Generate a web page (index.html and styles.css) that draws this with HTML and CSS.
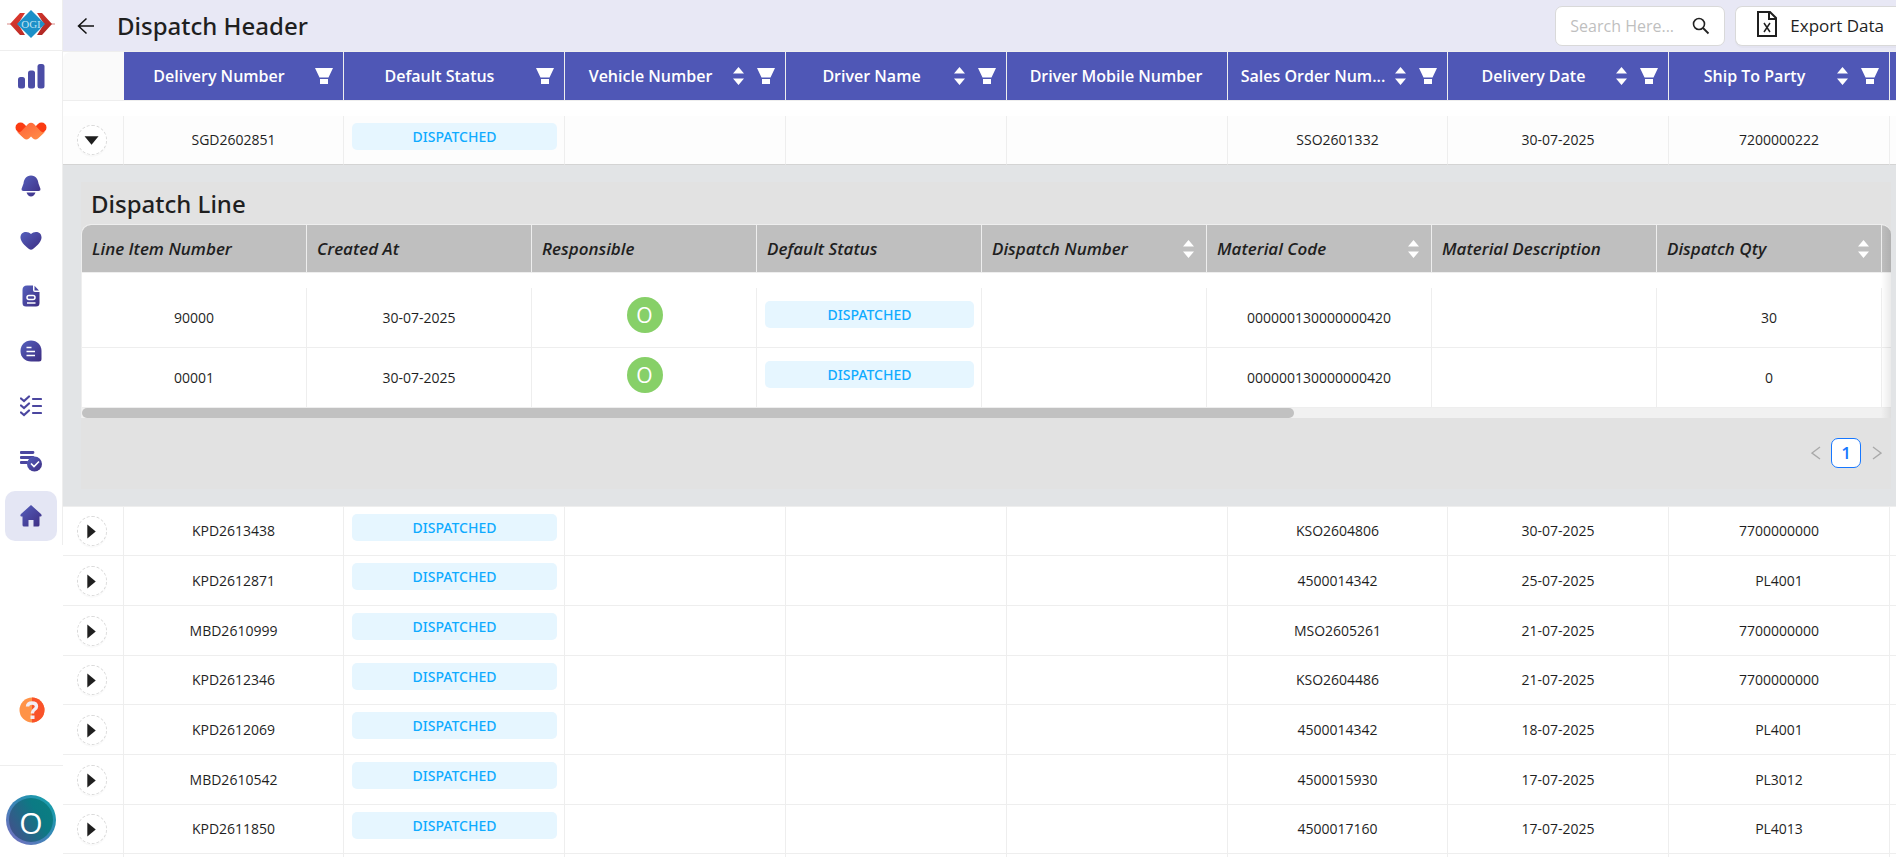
FILE: index.html
```html
<!DOCTYPE html>
<html lang="en">
<head>
<meta charset="utf-8">
<title>Dispatch Header</title>
<link rel="stylesheet" href="styles.css">
</head>
<body>
<svg class="defs" aria-hidden="true">
  <defs>
    <linearGradient id="indigo" x1="0" y1="0" x2="1" y2="1"><stop offset="0" stop-color="#5560bd"/><stop offset="1" stop-color="#3d2d82"/></linearGradient>
    <linearGradient id="orange" x1="0" y1="0" x2="1" y2="1"><stop offset="0" stop-color="#ff5f38"/><stop offset="1" stop-color="#ff9248"/></linearGradient>
    <linearGradient id="red" x1="0" y1="0" x2="1" y2="1"><stop offset="0" stop-color="#e23b30"/><stop offset="1" stop-color="#a92522"/></linearGradient>
  </defs>
  <symbol id="filter" viewBox="0 0 18 16"><path d="M0 0h18l-4.500 9.500H4.500zM5 11h8v5H5z" fill="#fff"/></symbol>
  <symbol id="sort" viewBox="0 0 11 18"><path d="M5.500 0L11 6.500H0zM0 11.500h11L5.500 18z" fill="#fff"/></symbol>
  <symbol id="right" viewBox="0 0 30 30"><path d="M10 8v15l9-7.500z" fill="#1f1f1f"/></symbol>
  <symbol id="down" viewBox="0 0 30 30"><path d="M7 11h15l-7.500 9z" fill="#1f1f1f"/></symbol>
</svg>
<div class="app">
  <aside class="sidebar">
    <a class="logo" href="#" aria-label="OGI">
      <svg width="48" height="28" viewBox="0 0 48 28">
        <path d="M0 14h48" stroke="#d98a86"/>
        <path d="M3 14L13 3h5L11 14l7 11h-5zM45 14L35 3h-5l7 11-7 11h5z" fill="url(#red)"/>
        <path d="M24 0l14 14-14 14L10 14z" fill="#1c90c8"/>
        <text x="24" y="18" text-anchor="middle" class="logo-text">OGI</text>
      </svg>
    </a>
    <nav class="nav">
      <a href="#" aria-label="Reports"><svg width="28" height="26" viewBox="0 0 28 26"><g fill="#4b4da6"><rect x="1" y="14" width="7" height="11.500" rx="2.500"/><rect x="11" y="7.500" width="7" height="18" rx="2.500"/><rect x="20.500" y="1" width="7" height="24.500" rx="2.500"/></g></svg></a>
      <a href="#" aria-label="Workspace"><svg width="32" height="18" viewBox="0 0 32 18"><path d="M5.500 5.500l5 5M26.500 5.500l-5 5" stroke="#fb3b12" stroke-width="10" stroke-linecap="round"/><path d="M1.500 9.500L9 16.500Q11.500 18.500 14 16.500L16 14.500l2 2Q20.500 18.500 23 16.500L30.500 9.500Q28 11.500 25.500 9L19 2Q16-.500 13 2L6.500 9Q4 11.500 1.500 9.500z" fill="url(#orange)"/></svg></a>
      <a href="#" aria-label="Notifications"><svg width="20" height="22" viewBox="0 0 20 22"><path d="M10 .5c5 0 7 4 7.500 8L19.500 14q.3 2-2 2h-15q-2.300 0-2-2L2.500 8.500C3 4.500 5 .5 10 .5zM5.500 17.500h9Q13 21.500 10 21.500T5.500 17.500z" fill="url(#indigo)"/></svg></a>
      <a href="#" aria-label="Favourites"><svg width="22" height="20" viewBox="0 0 22 20"><path d="M11 3C8-.5 0 0 .5 7 1 12 7 16 9 18q2 1.500 4 0c2-2 8-6 8.500-11C22 0 14-.5 11 3z" fill="url(#indigo)"/></svg></a>
      <a href="#" aria-label="Documents"><svg width="18" height="22" viewBox="0 0 18 22"><path d="M5 .5h6V5q0 2 2 2h4.500v11q0 3.500-3.500 3.500H4Q.5 21.500.5 18V5Q.5.5 5 .5zM12.500.8L17 5.500h-4.500z" fill="url(#indigo)"/><rect x="5" y="10.500" width="8" height="4" rx="2" fill="none" stroke="#fff" stroke-width="1.500"/><path d="M5 18h8.500" stroke="#fff" stroke-width="1.500"/></svg></a>
      <a href="#" aria-label="Messages"><svg width="22" height="22" viewBox="0 0 22 22"><path d="M11 .5c6 0 10.500 4.500 10.500 10.500v8q0 2.500-2.500 2.500h-8C5 21.500.5 17 .5 11S5 .5 11 .5z" fill="url(#indigo)"/><path d="M6.500 7.500h5M6.500 11.500H15M6.500 15.500H15" stroke="#fff" stroke-width="1.600"/></svg></a>
      <a href="#" aria-label="Tasks"><svg width="22" height="22" viewBox="0 0 22 22"><path d="M1 3.500l3 2.500 5-4.500M1 10.500L4 13l5-4.500M1 17.500L4 20l5-4.500M13 4h8M13 11h8M13 18h8" fill="none" stroke="#4b46a0" stroke-width="2.200" stroke-linecap="round"/></svg></a>
      <a href="#" aria-label="Approvals"><svg width="22" height="22" viewBox="0 0 22 22"><path d="M1 2.500h12M1 7.500h12M1 12.500h6" stroke="#4b46a0" stroke-width="2.800" stroke-linecap="round"/><circle cx="14.500" cy="14" r="7.500" fill="url(#indigo)"/><path d="M11 13.500l3 3 5-5" fill="none" stroke="#fff" stroke-width="1.700"/></svg></a>
      <a class="active" href="#" aria-label="Home"><svg width="22" height="22" viewBox="0 0 22 22"><path d="M11 0l10 9q1.500 2-.5 2.500H19.500V20q0 1.500-1.500 1.500H13.500V15h-5v6.500H4Q2.500 21.500 2.500 20v-8.500H1.500Q-.5 11 1 9z" fill="url(#indigo)"/></svg></a>
    </nav>
    <a class="help" href="#" aria-label="Help"><svg width="26" height="26" viewBox="0 0 26 26"><circle cx="13" cy="13" r="12.500" fill="#ff9347"/><path d="M13 .5a12.500 12.500 0 0 1 0 25z" fill="#f9522a"/><path d="M8.500 9.500Q8.500 6 13 6t4.500 3.500c0 3-4 3-4 6v1" fill="none" stroke="#f3edf5" stroke-width="3.400"/><rect x="11.500" y="18.500" width="4" height="3.500" fill="#f3edf5"/></svg></a>
    <div class="account"><button class="account-avatar" type="button">O</button></div>
  </aside>
  <main class="main">
    <header class="topbar">
      <button class="back" type="button" aria-label="Back"><svg width="18" height="18" viewBox="0 0 18 18"><path d="M17 9H1.500M9.500 1.500L1.500 9l8 7.500" fill="none" stroke="#111" stroke-width="1.500"/></svg></button>
      <h1 class="title">Dispatch Header</h1>
      <label class="search"><input type="text" placeholder="Search Here..." aria-label="Search"><svg width="18" height="18" viewBox="0 0 18 18"><circle cx="7" cy="7" r="5.500" fill="none" stroke="#222" stroke-width="1.600"/><path d="M11 11l5.500 5.500" stroke="#222" stroke-width="1.800"/></svg></label>
      <button class="export" type="button"><svg width="20" height="26" viewBox="0 0 20 26"><path d="M1 1h12l6 6v18H1zM12 1v7h7" fill="none" stroke="#1f1f1f" stroke-width="2"/><path d="M7 12l6 9M13 12l-6 9" stroke="#1f1f1f" stroke-width="1.500"/></svg>Export Data</button>
    </header>
    <table class="grid">
      <colgroup><col class="c-toggle"><col class="c-key"><col><col><col><col><col class="c-key"><col><col><col></colgroup>
      <thead><tr>
        <th class="blank"></th>
        <th><div class="head"><span>Delivery Number</span><svg class="i-filter"><use href="#filter"/></svg></div></th>
        <th><div class="head"><span>Default Status</span><svg class="i-filter"><use href="#filter"/></svg></div></th>
        <th><div class="head"><span>Vehicle Number</span><svg class="i-sort"><use href="#sort"/></svg><svg class="i-filter"><use href="#filter"/></svg></div></th>
        <th><div class="head"><span>Driver Name</span><svg class="i-sort"><use href="#sort"/></svg><svg class="i-filter"><use href="#filter"/></svg></div></th>
        <th><div class="head"><span>Driver Mobile Number</span></div></th>
        <th title="Sales Order Number"><div class="head"><span>Sales Order Num...</span><svg class="i-sort"><use href="#sort"/></svg><svg class="i-filter"><use href="#filter"/></svg></div></th>
        <th><div class="head"><span>Delivery Date</span><svg class="i-sort"><use href="#sort"/></svg><svg class="i-filter"><use href="#filter"/></svg></div></th>
        <th><div class="head"><span>Ship To Party</span><svg class="i-sort"><use href="#sort"/></svg><svg class="i-filter"><use href="#filter"/></svg></div></th>
        <th></th>
      </tr></thead>
      <tbody>
        <tr class="spacer"><td colspan="10"></td></tr>
        <tr class="open"><td class="t"><button class="toggle" type="button" aria-label="Collapse"><svg><use href="#down"/></svg></button></td><td>SGD2602851</td><td class="status"><span class="badge">DISPATCHED</span></td><td></td><td></td><td></td><td>SSO2601332</td><td>30-07-2025</td><td>7200000222</td><td></td></tr>
        <tr class="detail"><td colspan="10">
          <section class="panel">
            <h2 class="panel-title">Dispatch Line</h2>
            <div class="lines-wrap">
              <table class="lines">
                <thead><tr>
                  <th>Line Item Number</th><th>Created At</th><th>Responsible</th><th>Default Status</th>
                  <th><div class="head"><span>Dispatch Number</span><svg class="i-sort"><use href="#sort"/></svg></div></th>
                  <th><div class="head"><span>Material Code</span><svg class="i-sort"><use href="#sort"/></svg></div></th>
                  <th>Material Description</th>
                  <th><div class="head"><span>Dispatch Qty</span><svg class="i-sort"><use href="#sort"/></svg></div></th>
                  <th></th>
                </tr></thead>
                <tbody>
                  <tr class="spacer"><td colspan="9"></td></tr>
                  <tr><td>90000</td><td>30-07-2025</td><td class="status"><span class="avatar">O</span></td><td class="status"><span class="badge">DISPATCHED</span></td><td></td><td>000000130000000420</td><td></td><td>30</td><td></td></tr>
                  <tr><td>00001</td><td>30-07-2025</td><td class="status"><span class="avatar">O</span></td><td class="status"><span class="badge">DISPATCHED</span></td><td></td><td>000000130000000420</td><td></td><td>0</td><td></td></tr>
                </tbody>
              </table>
              <div class="track"><div class="thumb"></div></div>
            </div>
            <nav class="pager" aria-label="Pages">
              <button class="step" type="button" aria-label="Previous"><svg width="10" height="14" viewBox="0 0 10 14"><path d="M9 1L1 7l8 6" fill="none" stroke="#a9a9a9" stroke-width="1.400"/></svg></button>
              <button class="page" type="button">1</button>
              <button class="step" type="button" aria-label="Next"><svg width="10" height="14" viewBox="0 0 10 14"><path d="M1 1l8 6-8 6" fill="none" stroke="#a9a9a9" stroke-width="1.400"/></svg></button>
            </nav>
          </section>
        </td></tr>
      </tbody>
      <tbody class="rest">
        <tr><td class="t"><button class="toggle" type="button" aria-label="Expand"><svg><use href="#right"/></svg></button></td><td>KPD2613438</td><td class="status"><span class="badge">DISPATCHED</span></td><td></td><td></td><td></td><td>KSO2604806</td><td>30-07-2025</td><td>7700000000</td><td></td></tr>
        <tr><td class="t"><button class="toggle" type="button" aria-label="Expand"><svg><use href="#right"/></svg></button></td><td>KPD2612871</td><td class="status"><span class="badge">DISPATCHED</span></td><td></td><td></td><td></td><td>4500014342</td><td>25-07-2025</td><td>PL4001</td><td></td></tr>
        <tr><td class="t"><button class="toggle" type="button" aria-label="Expand"><svg><use href="#right"/></svg></button></td><td>MBD2610999</td><td class="status"><span class="badge">DISPATCHED</span></td><td></td><td></td><td></td><td>MSO2605261</td><td>21-07-2025</td><td>7700000000</td><td></td></tr>
        <tr><td class="t"><button class="toggle" type="button" aria-label="Expand"><svg><use href="#right"/></svg></button></td><td>KPD2612346</td><td class="status"><span class="badge">DISPATCHED</span></td><td></td><td></td><td></td><td>KSO2604486</td><td>21-07-2025</td><td>7700000000</td><td></td></tr>
        <tr><td class="t"><button class="toggle" type="button" aria-label="Expand"><svg><use href="#right"/></svg></button></td><td>KPD2612069</td><td class="status"><span class="badge">DISPATCHED</span></td><td></td><td></td><td></td><td>4500014342</td><td>18-07-2025</td><td>PL4001</td><td></td></tr>
        <tr><td class="t"><button class="toggle" type="button" aria-label="Expand"><svg><use href="#right"/></svg></button></td><td>MBD2610542</td><td class="status"><span class="badge">DISPATCHED</span></td><td></td><td></td><td></td><td>4500015930</td><td>17-07-2025</td><td>PL3012</td><td></td></tr>
        <tr><td class="t"><button class="toggle" type="button" aria-label="Expand"><svg><use href="#right"/></svg></button></td><td>KPD2611850</td><td class="status"><span class="badge">DISPATCHED</span></td><td></td><td></td><td></td><td>4500017160</td><td>17-07-2025</td><td>PL4013</td><td></td></tr>
        <tr><td></td><td></td><td></td><td></td><td></td><td></td><td></td><td></td><td></td><td></td></tr>
      </tbody>
    </table>
  </main>
</div>
</body>
</html>
```

FILE: styles.css
```css
* { box-sizing: border-box; }
body {
  margin: 0;
  background: #fff;
  color: #1f1f1f;
  font: 14px/22px "Open Sans", "Noto Sans", sans-serif;
}
button { font: inherit; color: inherit; cursor: pointer; padding: 0; border: 0; background: none; }
svg { display: block; flex: none; }
.defs { position: absolute; width: 0; height: 0; }
.app { display: flex; height: 100vh; overflow: hidden; }

/* Sidebar */
.sidebar { flex: none; width: 63px; display: flex; flex-direction: column; }
.logo {
  display: flex; align-items: center; justify-content: center;
  height: 51px; padding-bottom: 2px;
  border-right: 1px solid #eee; border-bottom: 1px solid #eee;
}
.logo-text { font: 11px "Liberation Serif", serif; fill: #bfe3f3; }
.nav {
  display: flex; flex-direction: column; gap: 5px;
  padding: 0 5px 4px; border-right: 1px solid #eee;
}
.nav a { display: flex; align-items: center; justify-content: center; height: 50px; border-radius: 10px; }
.nav .active { background: #e4e6f4; }
.help { display: flex; justify-content: center; margin-top: auto; padding-bottom: 42px; }
.account { border-top: 1px solid #eee; padding: 29px 0 12px 6px; }
.account-avatar {
  display: block; width: 50px; height: 50px; border-radius: 50%; color: #fff;
  font-size: 30px; line-height: 42px; padding-top: 4px;
  border: 3px solid transparent;
  background:
    linear-gradient(60deg, #4a4a8c, #0b7a84 65%, #0a8080) padding-box,
    linear-gradient(45deg, #7e6cc0, #3a86b8 50%, #0ca5a5) border-box;
}

/* Top bar */
.main { flex: 1; min-width: 0; overflow: hidden; }
.topbar { display: flex; align-items: center; height: 51px; padding-left: 14px; background: #e8e8f5; }
.title, .panel-title, .badge { font-family: "Noto Sans", "Open Sans", sans-serif; font-weight: 500; }
.title { flex: 1; margin: 0; padding-left: 22px; font-size: 24px; line-height: 32px; }
.search {
  display: flex; align-items: center; width: 170px; height: 40px; margin-right: 10px; padding: 0 14px;
  background: #fff; border: 1px solid #d9d9d9; border-radius: 7px;
}
.search input {
  flex: 1; min-width: 0; padding: 0; border: 0; outline: 0; background: none;
  font: inherit; font-size: 16px; color: inherit;
}
.search input::placeholder { color: #bfbfbf; opacity: 1; }
.export {
  display: flex; align-items: center; gap: 13px; height: 40px; padding: 0 12px 0 21px;
  background: #fff; border: 1px solid #d9d9d9; border-right: 0; border-radius: 7px 0 0 7px;
  box-shadow: 0 2px 0 rgba(0, 0, 0, .02); font-size: 17px;
}
.export svg { margin-bottom: 4px; }

/* Tables */
table { table-layout: fixed; border-spacing: 0; }
th, td { padding: 0 8px; text-align: center; border-right: 1px solid #eee; border-bottom: 1px solid #eee; }
.grid { width: 2048px; border-top: 1px solid #eee; }
.grid col { width: 221px; }
.grid .c-toggle { width: 61px; }
.grid .c-key { width: 220px; }
.grid th { height: 49px; padding-right: 10px; background: #4f57b6; color: #fff; font-size: 16px; font-weight: 600; }
.grid .blank { background: #fafafa; border-right: 0; border-radius: 8px 0 0 0; }
.head { display: flex; align-items: center; }
.head span { flex: 1; white-space: nowrap; }
.i-sort { width: 11px; height: 18px; margin-left: 5px; }
.i-filter { width: 18px; height: 16px; margin-left: 9px; }
.i-sort + .i-filter { margin-left: 13px; }
.grid .spacer td { height: 15px; padding: 0; border: 0; }
.open td { height: 49px; background: #fdfdfd; border-bottom-color: #d4d4d4; }
.rest td { height: 50px; }
.rest tr:nth-child(3n+1) td { height: 49px; }
.grid .status { vertical-align: top; padding: 7px 7px 0 8px; }
.badge {
  display: block; height: 27px; line-height: 27px; border-radius: 5px;
  background: #e6f6ff; color: #0fabff;
}
.grid .t { padding: 0 16px 0 14px; }
.toggle {
  display: block; width: 30px; height: 30px;
  background: #fff; border: 1px dashed #d9d9d9; border-radius: 50%; box-shadow: 0 2px 0 rgba(0, 0, 0, .02);
}
.toggle svg { width: 28px; height: 28px; }

/* Expanded row */
.grid .detail > td { padding: 17px 0 17px 18px; text-align: left; background: #e2e4e6; }
.panel { width: calc(100vw - 86px); background: #e2e2e2; }
.panel-title { margin: 0; padding: 6px 10px 4px; font-size: 24px; line-height: 32px; }
.lines-wrap {
  position: relative; overflow: hidden; background: #fff;
  border-top: 1px solid #eee; border-left: 1px solid #eee; border-radius: 10px 10px 0 0;
}
.lines-wrap::after {
  content: ""; position: absolute; inset: 0 0 0 auto; width: 10px;
  background: linear-gradient(to left, rgba(0, 0, 0, .08), transparent);
}
.lines { width: 2025px; }
.grid .lines th {
  height: 48px; padding: 0 12px 0 10px; background: #bfbfbf; color: #1f1f1f;
  text-align: left; font-style: italic; font-size: 17px;
}
.lines td { height: 60px; }
.grid .lines .status { padding: 13px 7px 0 8px; }
.avatar {
  display: block; width: 36px; height: 36px; margin: -4px auto 0; border-radius: 50%;
  background: #87d068; color: #fff; font-size: 21px; line-height: 37px;
}
.track { height: 10px; background: #f1f1f1; }
.thumb { width: 67%; height: 10px; border-radius: 5px; background: #c1c1c1; }
.pager { display: flex; justify-content: flex-end; align-items: center; gap: 1px; padding: 20px 0 21px; }
.step { display: flex; align-items: center; justify-content: center; width: 29px; height: 30px; }
.page {
  width: 30px; height: 30px; background: #fff; color: #1677ff; border: 1px solid #1677ff;
  border-radius: 7px; font-size: 17px; font-weight: 600; line-height: 28px;
}
```
